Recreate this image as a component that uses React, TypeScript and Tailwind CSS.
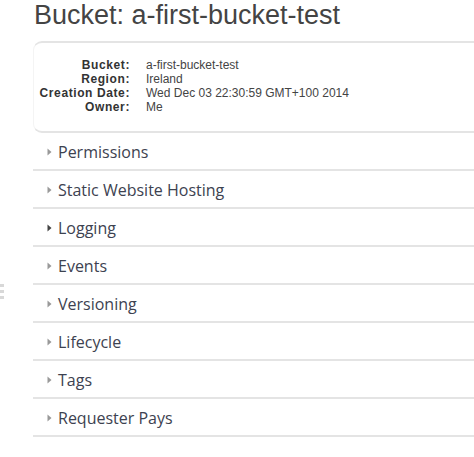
import React from "react";

const rows = [
  "Permissions",
  "Static Website Hosting",
  "Logging",
  "Events",
  "Versioning",
  "Lifecycle",
  "Tags",
  "Requester Pays",
];

function Arrow({ dark }: { dark?: boolean }) {
  return (
    <svg width="5" height="8" viewBox="0 0 5 8" className="shrink-0">
      <path d="M0.5 0.5 L4.5 4 L0.5 7.5 Z" fill={dark ? "#444" : "#999"} />
    </svg>
  );
}

export default function App() {
  return (
    <div className="relative h-[457px] w-[474px] overflow-hidden bg-white">
      <div className="absolute left-0 top-[284px] flex flex-col gap-[3px]">
        <div className="h-[3px] w-[4px] bg-[#d8d8d8]" />
        <div className="h-[3px] w-[4px] bg-[#d8d8d8]" />
        <div className="h-[3px] w-[4px] bg-[#d8d8d8]" />
      </div>
      <div className="pl-[33px]">
        <h1
          className="pl-[1px] text-[27px] leading-[31px] text-[#444]"
          style={{ fontFamily: '"Liberation Sans", Arial, sans-serif' }}
        >
          Bucket: a-first-bucket-test
        </h1>
        <div className="mt-[10px] h-[92px] rounded-l-[9px] border-y-2 border-l border-[#e4e4e4] border-l-[#f4f4f4] pt-[15px]">
          <div
            className="grid grid-cols-[96px_1fr] gap-x-[16px] text-[12px] leading-[14px]"
            style={{ fontFamily: '"Liberation Sans", Arial, sans-serif' }}
          >
            <div className="text-right font-bold tracking-[0.6px] text-[#333]">Bucket:</div>
            <div className="text-[#444]">a-first-bucket-test</div>
            <div className="text-right font-bold tracking-[0.6px] text-[#333]">Region:</div>
            <div className="text-[#444]">Ireland</div>
            <div className="text-right font-bold tracking-[0.6px] text-[#333]">Creation Date:</div>
            <div className="text-[#444]">Wed Dec 03 22:30:59 GMT+100 2014</div>
            <div className="text-right font-bold tracking-[0.6px] text-[#333]">Owner:</div>
            <div className="text-[#444]">Me</div>
          </div>
        </div>
        <div style={{ fontFamily: '"Open Sans", sans-serif' }}>
          {rows.map((r, i) => (
            <div
              key={r}
              className="flex h-[38px] items-center gap-[6px] border-b-2 border-[#e4e4e4] pl-[14px] pt-[1px]"
            >
              <Arrow dark={i === 2} />
              <span className="text-[16px] text-[#3d4250]">{r}</span>
            </div>
          ))}
        </div>
      </div>
    </div>
  );
}
